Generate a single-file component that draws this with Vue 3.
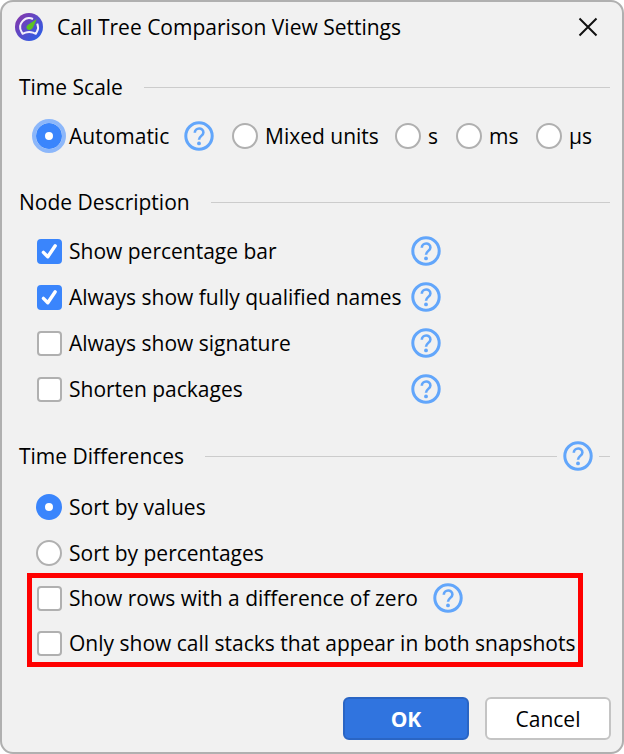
<template>
  <main class="dialog" role="dialog" aria-labelledby="dialog-title">
    <header class="title-bar">
      <svg class="logo" viewBox="0 0 28 28" aria-hidden="true">
        <defs>
          <linearGradient id="logo-fill" x1="0" y1="0" x2="1" y2="1">
            <stop offset="0.1" stop-color="#8238ae" />
            <stop offset="0.9" stop-color="#2c5ee6" />
          </linearGradient>
        </defs>
        <circle cx="14" cy="14" r="14" fill="url(#logo-fill)" />
        <path
          d="M18 6 A9 9 0 0 0 6.4 18.6 L7.6 20.8 L10.4 19.6 Q14.2 18.6 18 19.6 L20.8 20.8 L22 18.6 A9 9 0 0 0 22.2 10.6"
          fill="none"
          stroke="#f3effb"
          stroke-width="2"
          stroke-linejoin="round"
        />
        <path d="M21.8 6 L18 14.6 C16.6 17.4 13.4 17.6 12 16 C10.8 14.4 11.6 12.6 13.4 11.6 Z" fill="#5cc322" />
      </svg>
      <h1 id="dialog-title">Call Tree Comparison View Settings</h1>
      <button class="close" type="button" aria-label="Close">
        <svg viewBox="0 0 20 20">
          <path d="M1.5 1.5 L18.5 18.5 M18.5 1.5 L1.5 18.5" />
        </svg>
      </button>
    </header>

    <section role="group" aria-labelledby="scale-title">
      <div class="heading">
        <h2 id="scale-title">Time Scale</h2>
        <span class="rule"></span>
      </div>
      <div class="scale-row">
        <div v-for="unit in units" :key="unit.value" class="option">
          <label>
            <input
              v-model="scale"
              type="radio"
              name="scale"
              :value="unit.value"
              :class="{ focused: unit.value === 'auto' }"
            />
            {{ unit.label }}
          </label>
          <button v-if="unit.help" class="help" type="button" aria-label="Help">
            <svg viewBox="0 0 30 30">
              <circle cx="15" cy="15" r="13.2" />
              <path d="M10.8 11.8 C10.8 6.2 19.4 6.2 19.4 11.4 C19.4 14.8 15 15 15 18.8" />
              <circle class="dot" cx="15" cy="22.4" r="1.9" />
            </svg>
          </button>
        </div>
      </div>
    </section>

    <section role="group" aria-labelledby="node-title">
      <div class="heading">
        <h2 id="node-title">Node Description</h2>
        <span class="rule"></span>
      </div>
      <div class="node-rows">
        <div v-for="item in nodeOptions" :key="item.label" class="option">
          <label>
            <span class="check">
              <input v-model="item.checked" type="checkbox" />
              <svg v-if="item.checked" viewBox="0 0 25 25" aria-hidden="true">
                <path d="M6.4 13.4 L10.8 17.8 L18.2 6.8" />
              </svg>
            </span>
            {{ item.label }}
          </label>
          <button class="help" type="button" aria-label="Help">
            <svg viewBox="0 0 30 30">
              <circle cx="15" cy="15" r="13.2" />
              <path d="M10.8 11.8 C10.8 6.2 19.4 6.2 19.4 11.4 C19.4 14.8 15 15 15 18.8" />
              <circle class="dot" cx="15" cy="22.4" r="1.9" />
            </svg>
          </button>
        </div>
      </div>
    </section>

    <section role="group" aria-labelledby="diff-title">
      <div class="heading">
        <h2 id="diff-title">Time Differences</h2>
        <span class="rule"></span>
        <button class="help" type="button" aria-label="Help">
          <svg viewBox="0 0 30 30">
            <circle cx="15" cy="15" r="13.2" />
            <path d="M10.8 11.8 C10.8 6.2 19.4 6.2 19.4 11.4 C19.4 14.8 15 15 15 18.8" />
            <circle class="dot" cx="15" cy="22.4" r="1.9" />
          </svg>
        </button>
        <span class="rule short"></span>
      </div>
      <div class="sort-rows">
        <div v-for="item in sortOptions" :key="item.value" class="option">
          <label>
            <input v-model="sortBy" type="radio" name="sort" :value="item.value" />
            {{ item.label }}
          </label>
        </div>
      </div>
      <div class="highlight">
        <div v-for="item in diffOptions" :key="item.label" class="option">
          <label>
            <span class="check">
              <input v-model="item.checked" type="checkbox" />
              <svg v-if="item.checked" viewBox="0 0 25 25" aria-hidden="true">
                <path d="M6.4 13.4 L10.8 17.8 L18.2 6.8" />
              </svg>
            </span>
            {{ item.label }}
          </label>
          <button v-if="item.help" class="help" type="button" aria-label="Help">
            <svg viewBox="0 0 30 30">
              <circle cx="15" cy="15" r="13.2" />
              <path d="M10.8 11.8 C10.8 6.2 19.4 6.2 19.4 11.4 C19.4 14.8 15 15 15 18.8" />
              <circle class="dot" cx="15" cy="22.4" r="1.9" />
            </svg>
          </button>
        </div>
      </div>
    </section>

    <footer class="actions">
      <button class="btn primary" type="button">OK</button>
      <button class="btn" type="button">Cancel</button>
    </footer>
  </main>
</template>

<script setup>
import { ref } from 'vue'

const scale = ref('auto')
const sortBy = ref('values')

const units = [
  { value: 'auto', label: 'Automatic', help: true },
  { value: 'mixed', label: 'Mixed units' },
  { value: 's', label: 's' },
  { value: 'ms', label: 'ms' },
  { value: 'us', label: 'µs' }
]

const nodeOptions = ref([
  { label: 'Show percentage bar', checked: true },
  { label: 'Always show fully qualified names', checked: true },
  { label: 'Always show signature', checked: false },
  { label: 'Shorten packages', checked: false }
])

const sortOptions = [
  { value: 'values', label: 'Sort by values' },
  { value: 'percentages', label: 'Sort by percentages' }
]

const diffOptions = ref([
  { label: 'Show rows with a difference of zero', checked: false, help: true },
  { label: 'Only show call stacks that appear in both snapshots', checked: false }
])
</script>

<style>
body {
  background: #ffffff;
}
</style>

<style scoped>
.dialog {
  box-sizing: border-box;
  border: 2px solid #b0b0b0;
  border-radius: 13px;
  background: #f1f1f1;
  padding: 0 12px 12px 17px;
  color: #000000;
  font-family: "Open Sans", "Noto Sans", sans-serif;
  font-size: 21px;
  line-height: 30px;
  white-space: nowrap;
}

h1,
h2 {
  margin: 0;
  font-size: 21px;
  font-weight: 400;
}

button {
  margin: 0;
  padding: 0;
  border: 0;
  background: none;
  font: inherit;
  color: inherit;
}

.title-bar {
  display: flex;
  align-items: center;
  gap: 14px;
  height: 50px;
  margin-left: -4px;
  margin-bottom: 20px;
}

.logo {
  width: 28px;
  height: 28px;
}

.close {
  width: 20px;
  height: 20px;
  margin-left: auto;
  margin-right: 12px;
}

.close svg {
  display: block;
  fill: none;
  stroke: #111111;
  stroke-width: 2;
}

.heading {
  display: flex;
  align-items: center;
  height: 30px;
}

.rule {
  flex: 1;
  height: 1px;
  margin-left: 21px;
  background: #cccccc;
}

.heading .help {
  margin: 0 6px;
}

.rule.short {
  flex: none;
  width: 11px;
  margin-left: 0;
}

.option {
  display: flex;
  align-items: center;
  height: 30px;
  gap: 15px;
}

label {
  display: flex;
  align-items: center;
  gap: 7px;
}

input {
  appearance: none;
  box-sizing: border-box;
  margin: 0;
  border: 2px solid #b0b0b0;
  background: #ffffff;
}

input[type="radio"] {
  width: 26px;
  height: 26px;
  border-radius: 50%;
}

input[type="radio"]:checked {
  border: 9px solid #3a85fc;
}

.focused:checked {
  outline: 4px solid #8cb7fa;
}

.check {
  display: grid;
  margin-left: 1px;
}

.check input,
.check svg {
  grid-area: 1 / 1;
  width: 25px;
  height: 25px;
}

.check input {
  border-radius: 4px;
}

.check input:checked {
  border-color: #3a85fc;
  background: #3a85fc;
}

.check svg {
  fill: none;
  stroke: #ffffff;
  stroke-width: 3.4;
  stroke-linecap: round;
  stroke-linejoin: round;
  pointer-events: none;
}

.help {
  flex: none;
  width: 30px;
  height: 30px;
}

.help svg {
  display: block;
  fill: none;
  stroke: #62a6fb;
  stroke-width: 3;
}

.help path {
  stroke-width: 2.6;
}

.help .dot {
  fill: #62a6fb;
  stroke: none;
}

.scale-row {
  display: grid;
  grid-template-columns: 196px 163px 61px 80px auto;
  margin: 19px 0 36px 17px;
}

.node-rows {
  display: grid;
  gap: 16px;
  margin: 19px 0 37px 17px;
}

.node-rows label {
  width: 360px;
}

.sort-rows {
  display: grid;
  gap: 16px;
  margin: 21px 0 5px 17px;
}

.highlight {
  box-sizing: border-box;
  display: grid;
  gap: 15px;
  width: fit-content;
  margin-left: 8px;
  padding: 5px 3px 4px 4px;
  border: 5px solid #ff0000;
}

.actions {
  display: flex;
  justify-content: flex-end;
  gap: 16px;
  margin-top: 30px;
  margin-right: -1px;
}

.btn {
  box-sizing: border-box;
  width: 126px;
  height: 43px;
  border: 2px solid #c4c4c4;
  border-radius: 6px;
  background: #ffffff;
}

.primary {
  border-color: #2a65c4;
  background: #3074df;
  color: #ffffff;
  font-weight: 700;
}
</style>
